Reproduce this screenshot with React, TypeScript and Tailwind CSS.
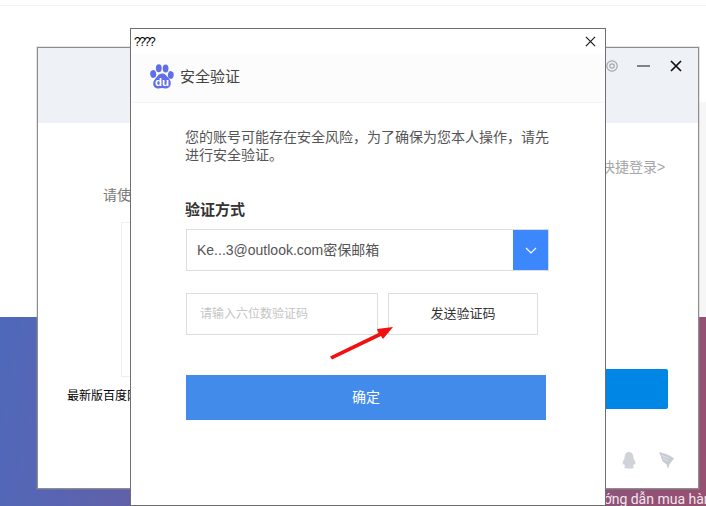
const CJK = "font-['Liberation_Sans','Noto_Sans_CJK_SC',sans-serif]";

function Paw() {
  return (
    <svg width="24" height="26" viewBox="0 0 24 26" fill="#5f6eea">
      <ellipse cx="3.2" cy="10" rx="3" ry="3.9" transform="rotate(-10 3.2 10)" />
      <ellipse cx="8.8" cy="4.200" rx="2.900" ry="4" />
      <ellipse cx="15.600" cy="4.400" rx="2.900" ry="4" />
      <ellipse cx="20.800" cy="11" rx="2.900" ry="3.900" transform="rotate(8 20.800 11)" />
      <path d="M12 9.500c3 0 4.400 2.200 5.600 3.600 1.500 1.800 3.200 3.200 3.200 6.200 0 3.600-2.800 5.200-5.200 5.200-1.400 0-2.600-.4-3.600-.4s-2.200.4-3.600.4c-2.800 0-5.200-1.800-5.200-5 0-2.900 2-4.500 3.400-6.200 1.200-1.500 2.400-3.800 5.400-3.800z" />
      <text x="12" y="22.400" textAnchor="middle" fontSize="11.500" fontWeight="700" fill="#fff" fontFamily="Liberation Sans, sans-serif">du</text>
    </svg>
  );
}

function Cross({ size, width, color = "#111" }: { size: number; width: number; color?: string }) {
  return (
    <svg width={size} height={size} viewBox="0 0 12 12" stroke={color} strokeWidth={width} fill="none">
      <path d="M1 1l10 10M11 1L1 11" />
    </svg>
  );
}

export default function App() {
  return (
    <div className={`relative w-[706px] h-[506px] overflow-hidden bg-white ${CJK}`}>
      {/* page behind */}
      <div className="h-[6px] border-b border-[#f3f3f3]" />
      <div className="absolute left-[699px] right-0 top-[102px] h-[215px] bg-[#f6f6f6]" />
      <div className="absolute left-0 right-0 top-[317px] bottom-0 bg-[linear-gradient(100deg,#4f69bb_0%,#6b5b9d_35%,#975070_100%)]">
        <div className="absolute left-[585px] top-[172px] text-[14px] leading-[20px] whitespace-nowrap text-[#f3e6ee] font-['Roboto',sans-serif]">Hướng dẫn mua hàng</div>
      </div>

      {/* background window */}
      <div className="absolute left-[37px] top-[47px] w-[662px] h-[442px] bg-white border border-[#8d8d8d] shadow-[0_0_0_1px_rgba(150,150,150,0.25)] flex flex-col">
        <div className="h-[75px] bg-[#eef1f6] flex justify-end items-start pt-[12px] pr-[16px]">
          <svg width="12" height="12" viewBox="0 0 12 12" fill="none" stroke="#a4a6a9" strokeWidth="1.2">
            <circle cx="6" cy="6" r="5.200" />
            <circle cx="6" cy="6" r="2.200" />
          </svg>
          <div className="ml-[19px] w-[13px] h-[2px] bg-[#7e828a] mt-[5px]" />
          <div className="ml-[20px]"><Cross size={12} width={1.7} /></div>
        </div>
        <div className="relative flex-1">
          <div className="absolute left-[65px] top-[62px] text-[14px] leading-[20px] text-[#777]">请使用百度</div>
          <div className="absolute left-[83px] top-[99px] w-[200px] h-[155px] border border-[#eeeeee]" />
          <div className="absolute left-[29px] top-[264px] text-[12px] leading-[18px] text-black whitespace-nowrap">最新版百度网盘</div>
          <div className="absolute left-[563px] top-[34px] text-[14px] leading-[20px] text-[#a6a6a6] whitespace-nowrap">快捷登录&gt;</div>
          <div className="absolute left-[481px] top-[246px] w-[149px] h-[40px] rounded-[2px] bg-[#0087e6]" />
          <svg className="absolute left-[584px] top-[329px]" width="14" height="17" viewBox="0 0 16 18" fill="#d0d3d9" preserveAspectRatio="none">
            <path d="M8 0c3.200 0 5 2.400 5 5.200 0 1.400.6 2.200 1.300 3.600.9 1.800 1.300 4 .7 4.500-.4.300-.9-.2-1.300-.8-.2 1.100-.7 2-1.400 2.700.8.400 1.300.900 1.200 1.500-.1.500-1.300.800-5.500.800s-5.400-.3-5.500-.8c-.1-.6.400-1.100 1.200-1.500-.7-.7-1.200-1.600-1.400-2.700-.4.600-.9 1.100-1.300.8-.6-.5-.2-2.700.7-4.500C2.400 7.400 3 6.600 3 5.200 3 2.400 4.800 0 8 0z" />
          </svg>
          <svg className="absolute left-[621px] top-[329px]" width="15" height="17" viewBox="0 0 16 18" fill="#c6cbd4" preserveAspectRatio="none">
            <path d="M0 0C5 1 11 3 16 7L11.500 12.500 9.500 18 8 13 4 10 2 5z" />
            <path d="M2.500 3.500L11 7M4 6.500L10 9.500" stroke="#e8eaee" strokeWidth="0.8" fill="none" />
          </svg>
        </div>
      </div>

      {/* dialog */}
      <div className="absolute left-[130px] top-[28px] w-[476px] h-[478px] bg-white border border-[#6f6f6f] flex flex-col">
        <div className="h-[25px] flex items-center justify-between pl-[3px] pr-[9px]">
          <span className="text-[12px] leading-[24px] text-black tracking-[-1.67px]">????</span>
          <Cross size={11} width={1.2} />
        </div>
        <div className="h-[49px] bg-[#fcfcfc] border-b border-[#f3f3f3] flex items-center pl-[19px] pb-[2px] gap-[6px]">
          <Paw />
          <span className="text-[15px] text-[#444]">安全验证</span>
        </div>
        <div className="flex-1 flex flex-col pl-[55px] pr-[55px] relative">
          <p className="mt-[25px] -ml-[1px] w-[368px] text-[14px] leading-[18px] text-[#555]">您的账号可能存在安全风险，为了确保为您本人操作，请先进行安全验证。</p>
          <div className="mt-[36px] -ml-[1px] text-[15px] leading-[20px] font-bold text-[#333]">验证方式</div>
          <div className="mt-[9px] w-[363px] h-[42px] border border-[#dddddd] flex items-center justify-between">
            <span className="pl-[10px] text-[14px] text-[#555]">Ke...3@outlook.com密保邮箱</span>
            <div className="w-[35px] h-[40px] bg-[#3b87fb] flex items-center justify-center">
              <svg width="12" height="7" viewBox="0 0 12 7" fill="none" stroke="#fff" strokeWidth="1.2"><path d="M1 1l5 5 5-5" /></svg>
            </div>
          </div>
          <div className="mt-[22px] flex gap-[10px]">
            <div className="w-[192px] h-[42px] border border-[#dddddd] flex items-center pl-[13px] text-[12px] text-[#c4c4c4]">请输入六位数验证码</div>
            <div className="w-[150px] h-[42px] border border-[#dddddd] flex items-center justify-center text-[13px] text-[#333]">发送验证码</div>
          </div>
          <div className="mt-[40px] w-[360px] h-[45px] bg-[#428bea] flex items-center justify-center text-[14px] text-white">确定</div>
          <svg className="absolute left-[198px] top-[220px]" width="66" height="40" viewBox="0 0 66 40" fill="#f01010">
            <path d="M1 33.500L49.500 10 48 6 64 4 54 16 52 13 3 36.500z" />
          </svg>
        </div>
      </div>
    </div>
  );
}
